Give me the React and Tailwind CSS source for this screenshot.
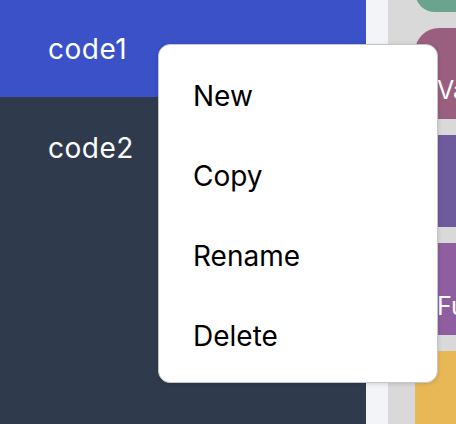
import React from "react";

const files = ["code1", "code2"];
const blocks = [
  { color: "bg-[#6aa48e]", label: "", h: "h-[40px] -mt-[28px]" },
  { color: "bg-[#9a5f7e]", label: "Va", h: "h-[91px]" },
  { color: "bg-[#6d5b9e]", label: "", h: "h-[92px]" },
  { color: "bg-[#8f5ea0]", label: "Fu", h: "h-[92px]" },
  { color: "bg-[#e8b857]", label: "", h: "h-[120px]" },
];

export default function App() {
  return (
    <div className="relative flex h-[424px] w-[456px] overflow-hidden font-['Inter','Liberation_Sans',sans-serif]">
      <aside className="w-[366px] shrink-0 bg-[#2f3b4d]">
        {files.map((name, i) => (
          <div
            key={name}
            className={`flex items-center pl-[48px] text-[28px] tracking-[0.5px] text-white ${
              i === 0 ? "h-[97px] bg-[#3a51c7]" : "h-[102px]"
            }`}
          >
            {name}
          </div>
        ))}
      </aside>
      <div className="w-[22px] shrink-0 bg-[#f3f4f8]" />
      <div className="flex flex-1 flex-col gap-[16px] bg-[#d9d9d9] pl-[27px]">
        {blocks.map((b, i) => (
          <div
            key={i}
            className={`flex shrink-0 items-end rounded-l-[24px] pb-[16px] pl-[22px] text-[25px] leading-none text-white ${b.color} ${b.h}`}
          >
            {b.label}
          </div>
        ))}
      </div>

      {/* context menu */}
      <div className="absolute left-[158px] top-[44px] flex h-[339px] w-[280px] flex-col rounded-[12px] border border-[#c6c6c6] bg-white pt-[11px] shadow-[0_1px_4px_rgba(0,0,0,0.15)]">
        {["New", "Copy", "Rename", "Delete"].map((item) => (
          <div key={item} className="flex h-[80px] items-center pl-[34px] text-[28px] text-black">
            {item}
          </div>
        ))}
      </div>
    </div>
  );
}
